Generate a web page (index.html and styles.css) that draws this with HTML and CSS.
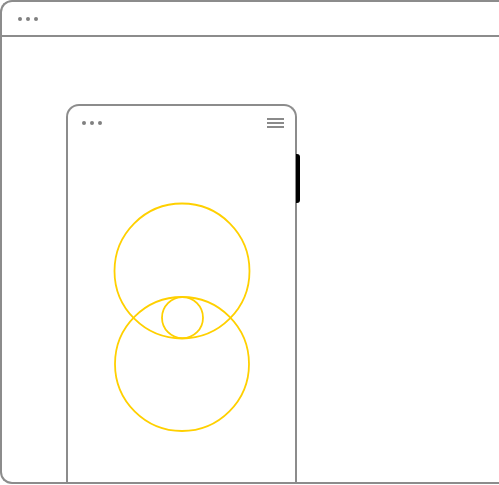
FILE: index.html
```html
<!DOCTYPE html>
<html>
<head>
<meta charset="utf-8">
<link rel="stylesheet" href="styles.css">
</head>
<body>
<div class="browser">
  <div class="browser-bar">
    <div class="dots"><span></span><span></span><span></span></div>
  </div>
  <div class="browser-body">
    <div class="phone">
      <div class="side-button"></div>
      <div class="phone-header">
        <div class="dots"><span></span><span></span><span></span></div>
        <div class="hamburger"><span></span><span></span><span></span></div>
      </div>
      <svg class="logo" width="140" height="234" viewBox="0 0 140 234">
        <circle cx="70" cy="69" r="67.5" fill="none" stroke="#ffd000" stroke-width="1.8"/>
        <circle cx="70" cy="162" r="67" fill="none" stroke="#ffd000" stroke-width="1.8"/>
        <circle cx="70.5" cy="115.7" r="20.5" fill="none" stroke="#ffd000" stroke-width="1.8"/>
      </svg>
    </div>
  </div>
</div>
</body>
</html>
```

FILE: styles.css
```css
html, body {
  margin: 0;
  padding: 0;
  background: #fff;
  overflow: hidden;
}
.browser {
  box-sizing: border-box;
  width: 100%;
  height: 484px;
  border: 2px solid #8c8c8c;
  border-right: none;
  border-radius: 12px 0 0 12px;
  display: flex;
  flex-direction: column;
  overflow: hidden;
}
.browser-bar {
  height: 33px;
  border-bottom: 2px solid #8c8c8c;
  display: flex;
  align-items: center;
  padding-left: 16px;
  flex: none;
}
.dots {
  display: flex;
  gap: 4px;
}
.dots span {
  width: 4px;
  height: 4px;
  border-radius: 50%;
  background: #808080;
}
.browser-body {
  flex: 1;
  padding-left: 64px;
  padding-top: 67px;
  overflow: hidden;
}
.phone {
  position: relative;
  box-sizing: border-box;
  width: 231px;
  height: 500px;
  border: 2px solid #8c8c8c;
  border-bottom: none;
  border-radius: 13px 13px 0 0;
  display: flex;
  flex-direction: column;
  align-items: center;
}
.side-button {
  position: absolute;
  right: -5px;
  top: 48px;
  width: 4px;
  height: 49px;
  background: #000;
  border-radius: 0 3px 3px 0;
}
.phone-header {
  align-self: stretch;
  height: 34px;
  display: flex;
  align-items: center;
  justify-content: space-between;
  padding: 0 11px 0 14px;
}
.hamburger {
  display: flex;
  flex-direction: column;
  gap: 2px;
  margin-top: -1px;
}
.hamburger span {
  width: 17px;
  height: 2px;
  background: #8a8a8a;
}
.logo {
  margin-top: 62px;
  display: block;
}
```
